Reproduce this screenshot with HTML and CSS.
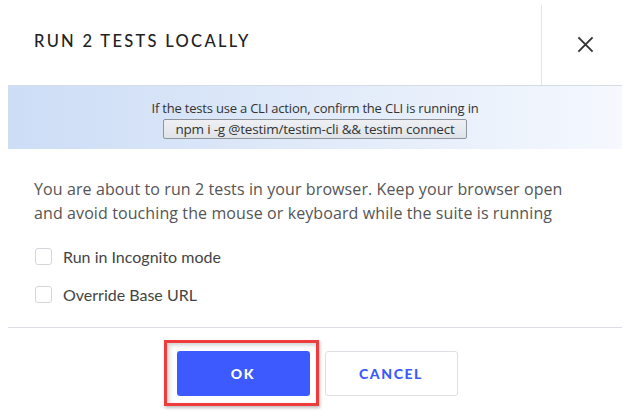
FILE: index.html
```html
<!DOCTYPE html>
<html>
<head>
<meta charset="utf-8">
<link rel="stylesheet" href="styles.css">
</head>
<body>
<div class="dialog">
  <header class="header">
    <h1 class="title">RUN 2 TESTS LOCALLY</h1>
    <div class="close-area">
      <svg class="close-icon" width="18" height="18" viewBox="0 0 18 18"><path d="M1.5 1.5 L16.5 16.5 M16.5 1.5 L1.5 16.5" stroke="#333" stroke-width="2" fill="none"/></svg>
    </div>
  </header>
  <div class="banner">
    <div class="banner-text">If the tests use a CLI action, confirm the CLI is running in</div>
    <div class="code">npm i -g @testim/testim-cli &amp;&amp; testim connect</div>
  </div>
  <div class="content">
    <p class="message">You are about to run 2 tests in your browser. Keep your browser open and avoid touching the mouse or keyboard while the suite is running</p>
    <label class="option"><span class="checkbox"></span>Run in Incognito mode</label>
    <label class="option"><span class="checkbox"></span>Override Base URL</label>
  </div>
  <div class="footer">
    <div class="ok-wrap">
      <button class="btn btn-primary">OK</button>
      <span class="annotation"></span>
    </div>
    <button class="btn btn-secondary">CANCEL</button>
  </div>
</div>
</body>
</html>
```
FILE: styles.css
```css
html, body {
  margin: 0;
  padding: 0;
  background: #fff;
}
body {
  font-family: Lato, "Open Sans", sans-serif;
  color: #333;
  width: 628px;
  height: 418px;
  overflow: hidden;
}
.dialog {
  display: flex;
  flex-direction: column;
}
.header {
  display: flex;
  align-items: stretch;
  height: 80px;
  margin-top: 5px;
}
.title {
  flex: 1;
  margin: 0;
  padding-left: 34px;
  padding-bottom: 8px;
  display: flex;
  align-items: center;
  font-size: 16.5px;
  font-weight: 500;
  letter-spacing: 2.3px;
  color: #222;
}
.close-area {
  width: 86px;
  border-left: 1px solid #e3e5ea;
  display: flex;
  align-items: center;
  justify-content: center;
}
.close-icon {
  display: block;
  width: 17px;
  height: 17px;
  margin-top: -2px;
}
.banner {
  margin: 0 6px 0 8px;
  height: 64px;
  box-sizing: border-box;
  border-top: 1px solid #d6dce6;
  background: linear-gradient(to right, #cdddf6 0%, #e0eaf9 50%, #f5f8fe 100%);
  display: flex;
  flex-direction: column;
  align-items: center;
  padding-top: 14px;
}
.banner-text {
  font-family: "Open Sans", sans-serif;
  font-size: 13px;
  line-height: 17px;
  color: #333;
  letter-spacing: -0.2px;
}
.code {
  margin-top: 2px;
  height: 20px;
  box-sizing: border-box;
  padding: 0 11px;
  border: 1px solid #8f959c;
  border-radius: 2px;
  background: linear-gradient(#eef0f3, #dfe3e8);
  font-family: "Open Sans", sans-serif;
  font-size: 13.5px;
  line-height: 18px;
  color: #333;
  letter-spacing: -0.2px;
}
.content {
  padding: 28px 20px 0 34px;
  height: 150px;
}
.message {
  margin: 0 0 12px 0;
  max-width: 558px;
  font-family: "Open Sans", sans-serif;
  font-size: 16px;
  letter-spacing: 0.1px;
  line-height: 24px;
  color: #555;
}
.option {
  display: flex;
  align-items: center;
  height: 38px;
  font-size: 16px;
  color: #444;
  margin-left: 1px;
}
.checkbox {
  width: 17px;
  height: 17px;
  box-sizing: border-box;
  border: 1px solid #d4d6dc;
  border-radius: 3px;
  margin-right: 11px;
  background: #fff;
}
.footer {
  margin: 0 6px 0 8px;
  border-top: 1px solid #dcdde6;
  display: flex;
  justify-content: center;
  gap: 15px;
  padding-top: 23px;
  padding-left: 4px;
}
.ok-wrap {
  position: relative;
}
.btn {
  display: block;
  width: 133px;
  height: 45px;
  border-radius: 3px;
  font-family: Lato, sans-serif;
  font-weight: 900;
  font-size: 14px;
  letter-spacing: 1.6px;
  cursor: pointer;
}
.btn-primary {
  background: #3d5afe;
  color: #fff;
  border: none;
}
.btn-secondary {
  background: #fff;
  color: #3d5afe;
  border: 1px solid #dedfe4;
}
.annotation {
  position: absolute;
  left: -13px;
  top: -11px;
  width: 155px;
  height: 66px;
  box-sizing: border-box;
  border: 3px solid #ee3b3b;
  box-shadow: 1px 2px 3px rgba(0,0,0,0.25), inset 2px 2px 4px rgba(0,0,0,0.2);
  pointer-events: none;
}
```
